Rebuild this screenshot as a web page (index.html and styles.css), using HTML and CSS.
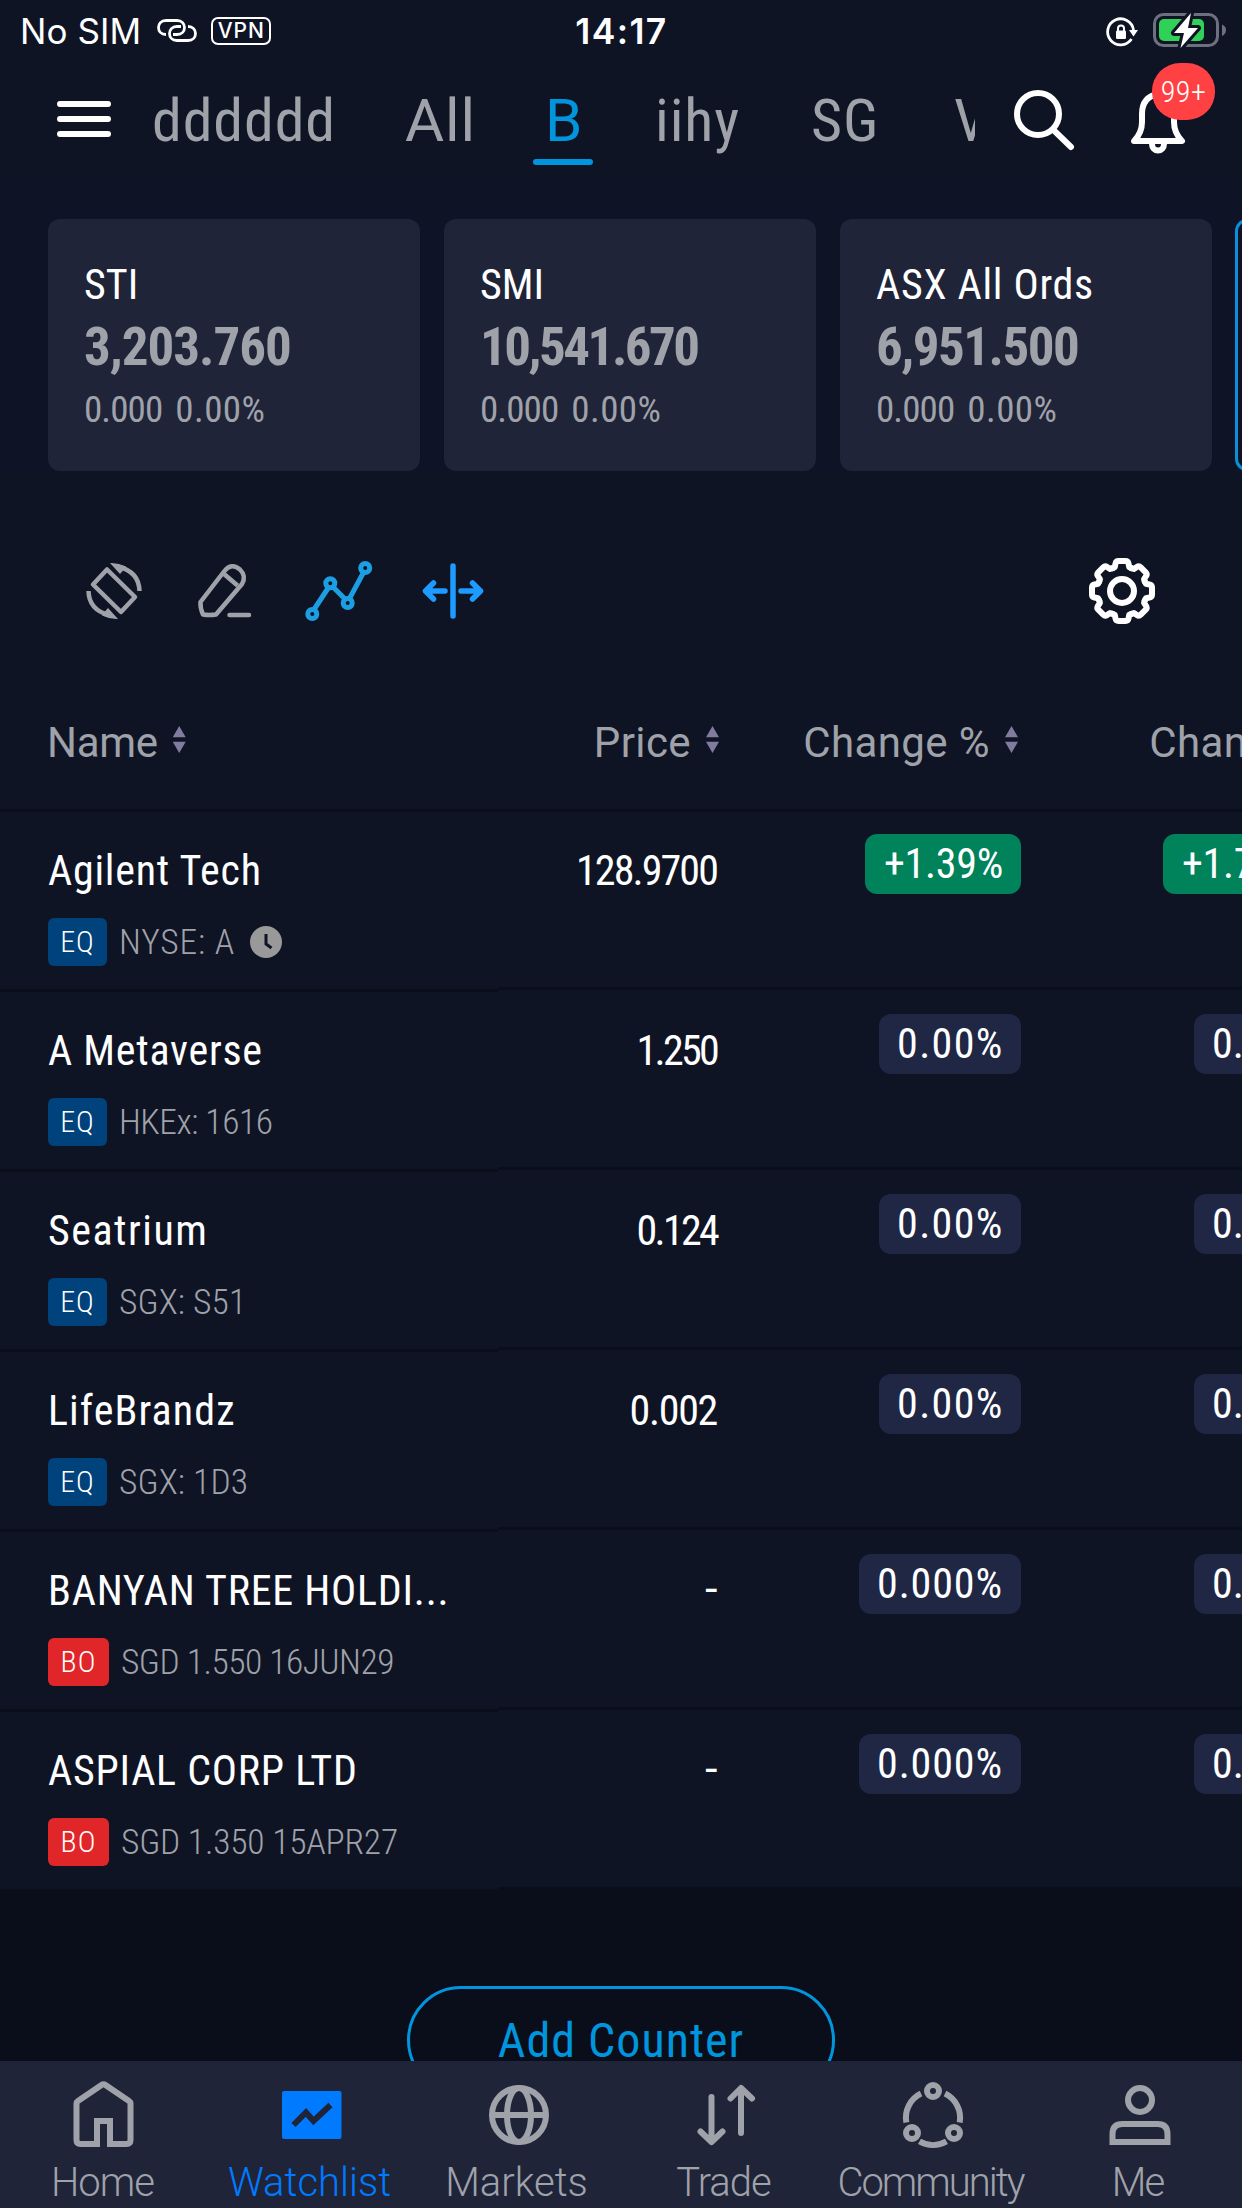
FILE: index.html
```html
<!DOCTYPE html>
<html lang="en">
<head>
<meta charset="utf-8">
<title>Watchlist</title>
<link rel="stylesheet" href="styles.css">
</head>
<body>
<div class="app">
  <div class="status">
    <div class="status-left">
      <span class="carrier">No SIM</span>
      <svg class="link" width="42" height="28" viewBox="156 18 42 28"><path d="M166 35.5C156 35.5 156 21.5 166 21.5H177C187 21.5 187 35.5 177 35.5H173M188 27.5C198 27.5 198 41.5 188 41.5H177C167 41.5 167 27.5 177 27.5H181"/></svg>
      <span class="vpn">VPN</span>
    </div>
    <span class="clock">14:17</span>
    <svg class="status-right" width="124" height="40" viewBox="1104 11 124 40">
      <path d="M1131.500 39A13 13 0 1 1 1133.500 30" fill="none" stroke="#fff" stroke-width="2.800"/>
      <path d="M1129 30H1138L1133.500 36.500Z" fill="#fff"/>
      <rect x="1116" y="30.500" width="10" height="8.500" rx="1.200" fill="#fff"/>
      <path d="M1118 31V28.500A3 3 0 0 1 1124 28.500V31" fill="none" stroke="#fff" stroke-width="2"/>
      <rect x="1154.500" y="14.500" width="63" height="31" rx="9" fill="none" stroke="#6d707d" stroke-width="3"/>
      <path d="M1222 24.500Q1226 26 1226 30T1222 36Z" fill="#6d707d"/>
      <rect x="1159" y="19" width="45" height="22" rx="5" fill="#30d158"/>
      <path d="M1191 13L1174 33H1184L1180.500 48L1198 28H1188Z" fill="#fff" stroke="#0f1425" stroke-width="6" stroke-linejoin="round" paint-order="stroke"/>
    </svg>
  </div>

  <header class="header">
    <svg class="menu" width="54" height="36" viewBox="0 0 54 36"><path d="M3 3H51M3 18H51M3 33H51"/></svg>
    <nav class="lists">
      <a class="list">dddddd</a>
      <a class="list list-wide">All</a>
      <a class="list list-active">B</a>
      <a class="list">iihy</a>
      <a class="list">SG</a>
      <a class="list">V</a>
    </nav>
    <svg class="search" width="66" height="72" viewBox="1011 86 66 72"><circle cx="1038" cy="114" r="21"/><path d="M1053.500 130L1071 147"/></svg>
    <div class="alerts">
      <svg width="60" height="72" viewBox="1128 86 60 72"><path d="M1134 141Q1142 133 1142 122V114Q1142 97 1158 94Q1174 97 1174 114V122Q1174 133 1182 141Z"/><path d="M1152 144A6 6.500 0 0 0 1164 144"/></svg>
      <span class="badge">99+</span>
    </div>
  </header>

  <main class="main">
    <section class="cards">
      <article class="card"><h2>STI</h2><strong class="n1">3,203.760</strong><p><span>0.000</span><span class="pct">0.00%</span></p></article>
      <article class="card"><h2>SMI</h2><strong class="n2">10,541.670</strong><p><span>0.000</span><span class="pct">0.00%</span></p></article>
      <article class="card"><h2 class="open">ASX All Ords</h2><strong>6,951.500</strong><p><span>0.000</span><span class="pct">0.00%</span></p></article>
      <article class="card card-add"></article>
    </section>

    <section class="tools">
      <svg class="grey" width="72" height="72" viewBox="78 555 72 72">
        <path d="M107 569.500L93 584.500L121 612L135 597Z"/>
        <path d="M119 567Q139 572 139.500 591M109 615Q89 610 88.500 591"/>
        <path class="solid" d="M110 563Q118 562.500 126 566.500L123.500 570L120 574ZM118 619Q110 619.500 102 615.500L104.500 612L108 608Z"/>
      </svg>
      <svg class="grey" width="72" height="72" viewBox="188 555 72 72"><path d="M200.500 602L224 571.500Q231.500 562 240 569.500Q246.500 576 242 584L216 614.500Q209.500 615.500 203 614.500Q200 608 200.500 602ZM224 574L237.500 585.500"/><path stroke-linecap="round" d="M229.500 615H249"/></svg>
      <svg class="cyan" width="82" height="72" viewBox="298 555 82 72"><path d="M314 609.500L328.500 587.500M333 587L345 599M349.500 598.500L363.500 572.500"/><circle cx="312.300" cy="614" r="4.500"/><circle cx="330.300" cy="583.300" r="4.500"/><circle cx="347.700" cy="603" r="4.500"/><circle cx="365.200" cy="568" r="4.500"/></svg>
      <svg class="blue" width="72" height="72" viewBox="418 555 72 72"><path d="M453 566V616M445 591H425.500M433.500 583L425.500 591L433.500 599M461 591H480.500M472.500 583L480.500 591L472.500 599"/></svg>
      <svg class="gear" width="72" height="72" viewBox="-36 -36 72 72">
        <defs><path id="tooth" d="M-9.400 -22.800L-7.200 -24L-6.500 -27.500Q-6 -30 -3.500 -30H3.500Q6 -30 6.500 -27.500L7.200 -24L9.400 -22.800"/></defs>
        <use href="#tooth"/><use href="#tooth" transform="rotate(45)"/><use href="#tooth" transform="rotate(90)"/><use href="#tooth" transform="rotate(135)"/><use href="#tooth" transform="rotate(180)"/><use href="#tooth" transform="rotate(225)"/><use href="#tooth" transform="rotate(270)"/><use href="#tooth" transform="rotate(315)"/>
        <circle r="12"/>
      </svg>
    </section>

    <section class="thead">
      <div class="th th-name">Name<i class="sort"></i></div>
      <div class="th th-price">Price<i class="sort"></i></div>
      <div class="th">Change %<i class="sort"></i></div>
      <div class="th">Change<i class="sort"></i></div>
    </section>

    <section class="table">
      <div class="names">
        <div class="name-row"><h3>Agilent Tech</h3><p><b class="tag eq">EQ</b><span class="code-loose">NYSE: A</span><svg width="32" height="32" viewBox="0 0 32 32"><circle cx="16" cy="16" r="16" fill="#999"/><path d="M16 8V18L21.500 22" fill="none" stroke="#0f1425" stroke-width="3"/></svg></p></div>
        <div class="name-row"><h3>A Metaverse</h3><p><b class="tag eq">EQ</b><span>HKEx: 1616</span></p></div>
        <div class="name-row"><h3 class="loose">Seatrium</h3><p><b class="tag eq">EQ</b><span class="code-mid">SGX: S51</span></p></div>
        <div class="name-row"><h3 class="mid">LifeBrandz</h3><p><b class="tag eq">EQ</b><span class="code-mid">SGX: 1D3</span></p></div>
        <div class="name-row"><h3>BANYAN TREE HOLDI...</h3><p><b class="tag bo">BO</b><span>SGD 1.550 16JUN29</span></p></div>
        <div class="name-row"><h3>ASPIAL CORP LTD</h3><p><b class="tag bo">BO</b><span class="code-apr">SGD 1.350 15APR27</span></p></div>
      </div>
      <div class="quotes">
        <div class="quote-row"><span class="price">128.9700</span><span class="cell"><em class="pill up">+1.39%</em></span><span class="cell"><em class="pill up w-change">+1.7700</em></span></div>
        <div class="quote-row"><span class="price narrow">1.250</span><span class="cell"><em class="pill w-pct">0.00%</em></span><span class="cell"><em class="pill w-zero">0.000</em></span></div>
        <div class="quote-row"><span class="price narrow">0.124</span><span class="cell"><em class="pill w-pct">0.00%</em></span><span class="cell"><em class="pill w-zero">0.000</em></span></div>
        <div class="quote-row"><span class="price even">0.002</span><span class="cell"><em class="pill w-pct">0.00%</em></span><span class="cell"><em class="pill w-zero">0.000</em></span></div>
        <div class="quote-row"><span class="price none">-</span><span class="cell"><em class="pill w-pct3">0.000%</em></span><span class="cell"><em class="pill w-zero">0.000</em></span></div>
        <div class="quote-row"><span class="price none">-</span><span class="cell"><em class="pill w-pct3">0.000%</em></span><span class="cell"><em class="pill w-zero">0.000</em></span></div>
      </div>
    </section>

    <section class="add"><button class="add-button">Add Counter</button></section>
  </main>

  <nav class="tabbar">
    <a class="tab"><svg width="72" height="72" viewBox="67.500 2078 72 72"><path d="M76 2103.500Q76 2102 77.500 2101L101 2085Q103 2083.500 105 2085L128.500 2101Q130 2102 130 2103.500V2140Q130 2144 126 2144H109.500V2121H96.500V2144H80Q76 2144 76 2140Z"/></svg><span class="snug">Home</span></a>
    <a class="tab tab-active"><svg width="72" height="72" viewBox="274.500 2078 72 72"><rect x="281.500" y="2091" width="59.500" height="48" rx="2" fill="#007aff" stroke="none"/><path class="cut" d="M293 2125L305.500 2112.500L313 2121L330 2105"/></svg><span>Watchlist</span></a>
    <a class="tab"><svg width="72" height="72" viewBox="481.500 2078 72 72"><circle cx="518.500" cy="2115" r="27"/><ellipse cx="518.500" cy="2115" rx="12" ry="27"/><path d="M491 2115H546"/></svg><span>Markets</span></a>
    <a class="tab"><svg class="round" width="72" height="72" viewBox="688.500 2078 72 72"><path d="M711 2097V2141M700 2131.500L711 2142L722 2131.500M740.500 2133V2089M730 2098.500L740.500 2088L751.500 2098.500"/></svg><span class="snug">Trade</span></a>
    <a class="tab"><svg width="72" height="72" viewBox="895.500 2078 72 72"><circle cx="932.500" cy="2091" r="6"/><circle cx="911.500" cy="2133" r="6"/><circle cx="953.500" cy="2133" r="6"/><path d="M920.500 2093.500A27 27 0 0 0 905.800 2122.500M944.500 2093.500A27 27 0 0 1 959.200 2122.500M919 2141.300A27 27 0 0 0 946 2141.300"/></svg><span class="tight">Community</span></a>
    <a class="tab"><svg width="72" height="72" viewBox="1102.500 2078 72 72"><circle cx="1139.500" cy="2100" r="12"/><path d="M1112 2142V2134Q1112 2124 1122 2124H1157Q1167 2124 1167 2134V2142Z"/></svg><span class="tight">Me</span></a>
  </nav>
</div>
</body>
</html>
```
FILE: styles.css
```css
* { box-sizing: border-box; margin: 0; padding: 0; }
body { background: #0a0e1b; }
svg { display: block; flex: none; }

.app {
  display: flex;
  flex-direction: column;
  width: 1242px;
  height: 2208px;
  overflow: hidden;
  color: #fff;
  font-family: "Roboto Condensed", Roboto, sans-serif;
  font-stretch: 75%;
}

/* status bar */
.status {
  flex: none;
  display: grid;
  grid-template-columns: 1fr auto 1fr;
  align-items: center;
  height: 62px;
  padding: 0 14px 0 20px;
  background: #0f1425;
  font-family: Inter, sans-serif;
  font-stretch: 100%;
}
.status-left { display: flex; align-items: center; }
.carrier { font-size: 35px; letter-spacing: 0.1px; }
.link { margin-left: 15px; fill: none; stroke: #fff; stroke-width: 2.8; }
.vpn {
  width: 60px;
  height: 28px;
  margin-left: 13px;
  border: 2.5px solid #fff;
  border-radius: 7px;
  font-size: 21px;
  font-weight: 500;
  line-height: 23px;
  letter-spacing: 1px;
  text-align: center;
}
.clock { margin-right: 5px; font-size: 35.5px; font-weight: 600; letter-spacing: 1.4px; }
.status-right { justify-self: end; }

/* header */
.header {
  flex: none;
  display: flex;
  align-items: center;
  height: 126px;
  padding: 0 27px 12px 57px;
  background: #0f1425;
}
.menu { stroke: #fff; stroke-width: 6; stroke-linecap: round; }
.lists {
  display: grid;
  grid-template-columns: 253px 140px 110px 156px 143px 100px;
  width: 823px;
  margin-left: 41px;
  overflow: hidden;
  color: #a0a2aa;
  font-size: 60px;
  line-height: 116px;
  letter-spacing: 0.9px;
}
.list { position: relative; height: 114px; padding-top: 1px; white-space: nowrap; }
.list-wide { font-family: Roboto, sans-serif; font-stretch: 100%; }
.list-active { color: #0095dc; font-family: Roboto, sans-serif; font-stretch: 100%; }
.list-active::after {
  content: "";
  position: absolute;
  left: -12px;
  bottom: 11px;
  width: 60px;
  height: 6px;
  border-radius: 3px;
  background: #0095dc;
}
.search { margin: 6px 0 0 36px; fill: none; stroke: #fff; stroke-width: 6; stroke-linecap: round; }
.alerts { position: relative; margin: 6px 0 0 51px; }
.alerts svg { fill: none; stroke: #fff; stroke-width: 6; stroke-linejoin: round; }
.badge {
  position: absolute;
  left: 24px;
  top: -23px;
  width: 63px;
  height: 57px;
  border-radius: 28px;
  background: #ff4144;
  font-size: 30px;
  font-weight: 300;
  line-height: 58px;
  letter-spacing: 0.5px;
  text-align: center;
}

/* index cards */
.main { flex: 1; min-height: 0; overflow: hidden; background: #0a0e1b; }

.cards {
  display: flex;
  gap: 24px;
  height: 283px;
  padding: 31px 0 0 48px;
  overflow: hidden;
  background: #0e1326;
}
.card {
  flex: none;
  width: 372px;
  height: 252px;
  padding: 37px 36px 0;
  border-radius: 12px;
  background: #1f2439;
}
.card-add { margin-left: -1px; border: 3px solid #0c8fdb; background: #0e1326; }
.card h2 { font-size: 42px; font-weight: 400; line-height: 57px; }
.card h2.open { letter-spacing: 0.7px; }
.card strong {
  display: block;
  color: #a0a2aa;
  font-size: 53px;
  font-weight: 700;
  line-height: 68px;
  letter-spacing: -1.5px;
}
.card strong.n1 { letter-spacing: -1px; }
.card strong.n2 { letter-spacing: -2.500px; }
.card p {
  display: flex;
  gap: 13px;
  color: #a0a2aa;
  font-size: 37px;
  line-height: 57px;
  letter-spacing: -0.9px;
}
.card .pct { letter-spacing: 0.4px; }

/* toolbar */
.tools {
  display: flex;
  align-items: center;
  gap: 38px;
  height: 205px;
  padding: 35px 84px 0 78px;
  background: #0f1425;
}
.tools svg { fill: none; stroke-width: 5; stroke-linecap: round; }
.tools .grey { stroke: #a0a2aa; stroke-width: 4.5; stroke-linecap: butt; stroke-linejoin: round; }
.tools .solid { fill: #a0a2aa; stroke: none; }
.tools .cyan { stroke: #1b9fe2; }
.tools .blue { stroke: #1e9bff; stroke-width: 5.5; stroke-linejoin: round; }
.tools .gear { margin-left: auto; stroke: #fff; stroke-width: 6; stroke-linejoin: round; }

/* watchlist table */
.thead {
  display: grid;
  grid-template-columns: 498px 221px 299px 304px;
  height: 136px;
  border-bottom: 3px solid #0a0e1b;
  background: #0f1425;
  color: #a0a2aa;
  font-family: Roboto, sans-serif;
  font-stretch: 100%;
  font-size: 42px;
  font-weight: 450;
  letter-spacing: 0.4px;
  overflow: hidden;
}
.th { display: flex; align-items: center; justify-content: flex-end; white-space: nowrap; }
.th-name { justify-content: flex-start; padding-left: 47px; letter-spacing: -0.3px; }
.sort {
  width: 13px;
  height: 27px;
  margin: -6px 0 0 15px;
  background: #807b9f;
  clip-path: polygon(50% 0, 100% 42%, 0 42%, 0 58%, 100% 58%, 50% 100%, 0 58%, 0 42%);
}

.table { display: flex; }
.names { flex: none; width: 498px; }
.name-row {
  height: 180px;
  padding: 34px 0 0 48px;
  border-bottom: 3px solid #0a0e1b;
  background: #0f1425;
}
.name-row h3 {
  font-size: 42px;
  font-weight: 400;
  line-height: 50px;
  letter-spacing: 0.75px;
  white-space: nowrap;
}
.name-row h3.loose { letter-spacing: 1.5px; }
.name-row h3.mid { letter-spacing: 1.1px; }
.name-row p {
  display: flex;
  align-items: center;
  height: 48px;
  margin-top: 22px;
  color: #a0a2aa;
  font-size: 35.500px;
  font-weight: 340;
  letter-spacing: -0.5px;
}
.name-row .code-loose { letter-spacing: 0.8px; }
.name-row .code-mid { letter-spacing: 0.100px; }
.name-row .code-apr { letter-spacing: -0.2px; }
.name-row p svg { margin-left: 15px; }
.tag {
  width: 59px;
  margin-right: 12px;
  border-radius: 6px;
  color: #fff;
  font-size: 30px;
  font-weight: 340;
  line-height: 48px;
  letter-spacing: 1px;
  text-align: center;
}
.eq { background: #00427c; }
.bo { width: 61px; background: #e12629; }

.quotes { flex: none; width: 744px; overflow: hidden; }
.quote-row {
  display: grid;
  grid-template-columns: 219px 304px 304px;
  align-items: start;
  justify-items: end;
  height: 180px;
  padding-top: 24px;
  border-bottom: 3px solid #0a0e1b;
  background: #0f1425;
  font-size: 42px;
}
.quote-row:first-child { height: 178px; padding-top: 22px; }
.price { margin-top: 7px; line-height: 60px; letter-spacing: -1.9px; }
.narrow { letter-spacing: -2.7px; }
.even { letter-spacing: -1.3px; }
.none { margin-top: 5px; padding-right: 2px; transform: scaleX(1.25); }
.pill {
  display: block;
  width: 156px;
  height: 60px;
  padding-left: 19px;
  border-radius: 12px;
  background: #1f2745;
  font-style: normal;
  line-height: 60px;
}
.up { background: #00825b; letter-spacing: -0.3px; }
.w-change { width: 162px; }
.w-pct { width: 142px; padding-left: 18px; letter-spacing: 1.4px; }
.w-pct3 { width: 162px; padding-left: 18px; letter-spacing: 0.9px; }
.w-zero { width: 131px; padding-left: 18px; }

.add { display: flex; justify-content: center; padding-top: 94px; }
.add-button {
  flex: none;
  width: 428px;
  height: 108px;
  border: 3px solid #0095dc;
  border-radius: 54px;
  background: none;
  color: #0095dc;
  font: inherit;
  font-size: 48px;
  letter-spacing: 1px;
}

/* bottom navigation */
.tabbar {
  flex: none;
  display: grid;
  grid-template-columns: repeat(6, 207px);
  height: 147px;
  background: #1f2439;
  color: #a0a2aa;
  font-family: Roboto, sans-serif;
  font-stretch: 100%;
  font-size: 40px;
  font-weight: 340;
}
.tab { display: flex; flex-direction: column; align-items: center; padding-top: 17px; }
.tab svg { fill: none; stroke: #a0a2aa; stroke-width: 6; }
.tab svg.round { stroke-linecap: round; stroke-linejoin: round; }
.tab .cut { stroke: #1f2439; }
.tab span { margin: 9px 2px 0 0; line-height: 48px; }
.tab .snug { letter-spacing: -1px; }
.tab .tight { letter-spacing: -2px; }
.tab-active { color: #007aff; }
```
